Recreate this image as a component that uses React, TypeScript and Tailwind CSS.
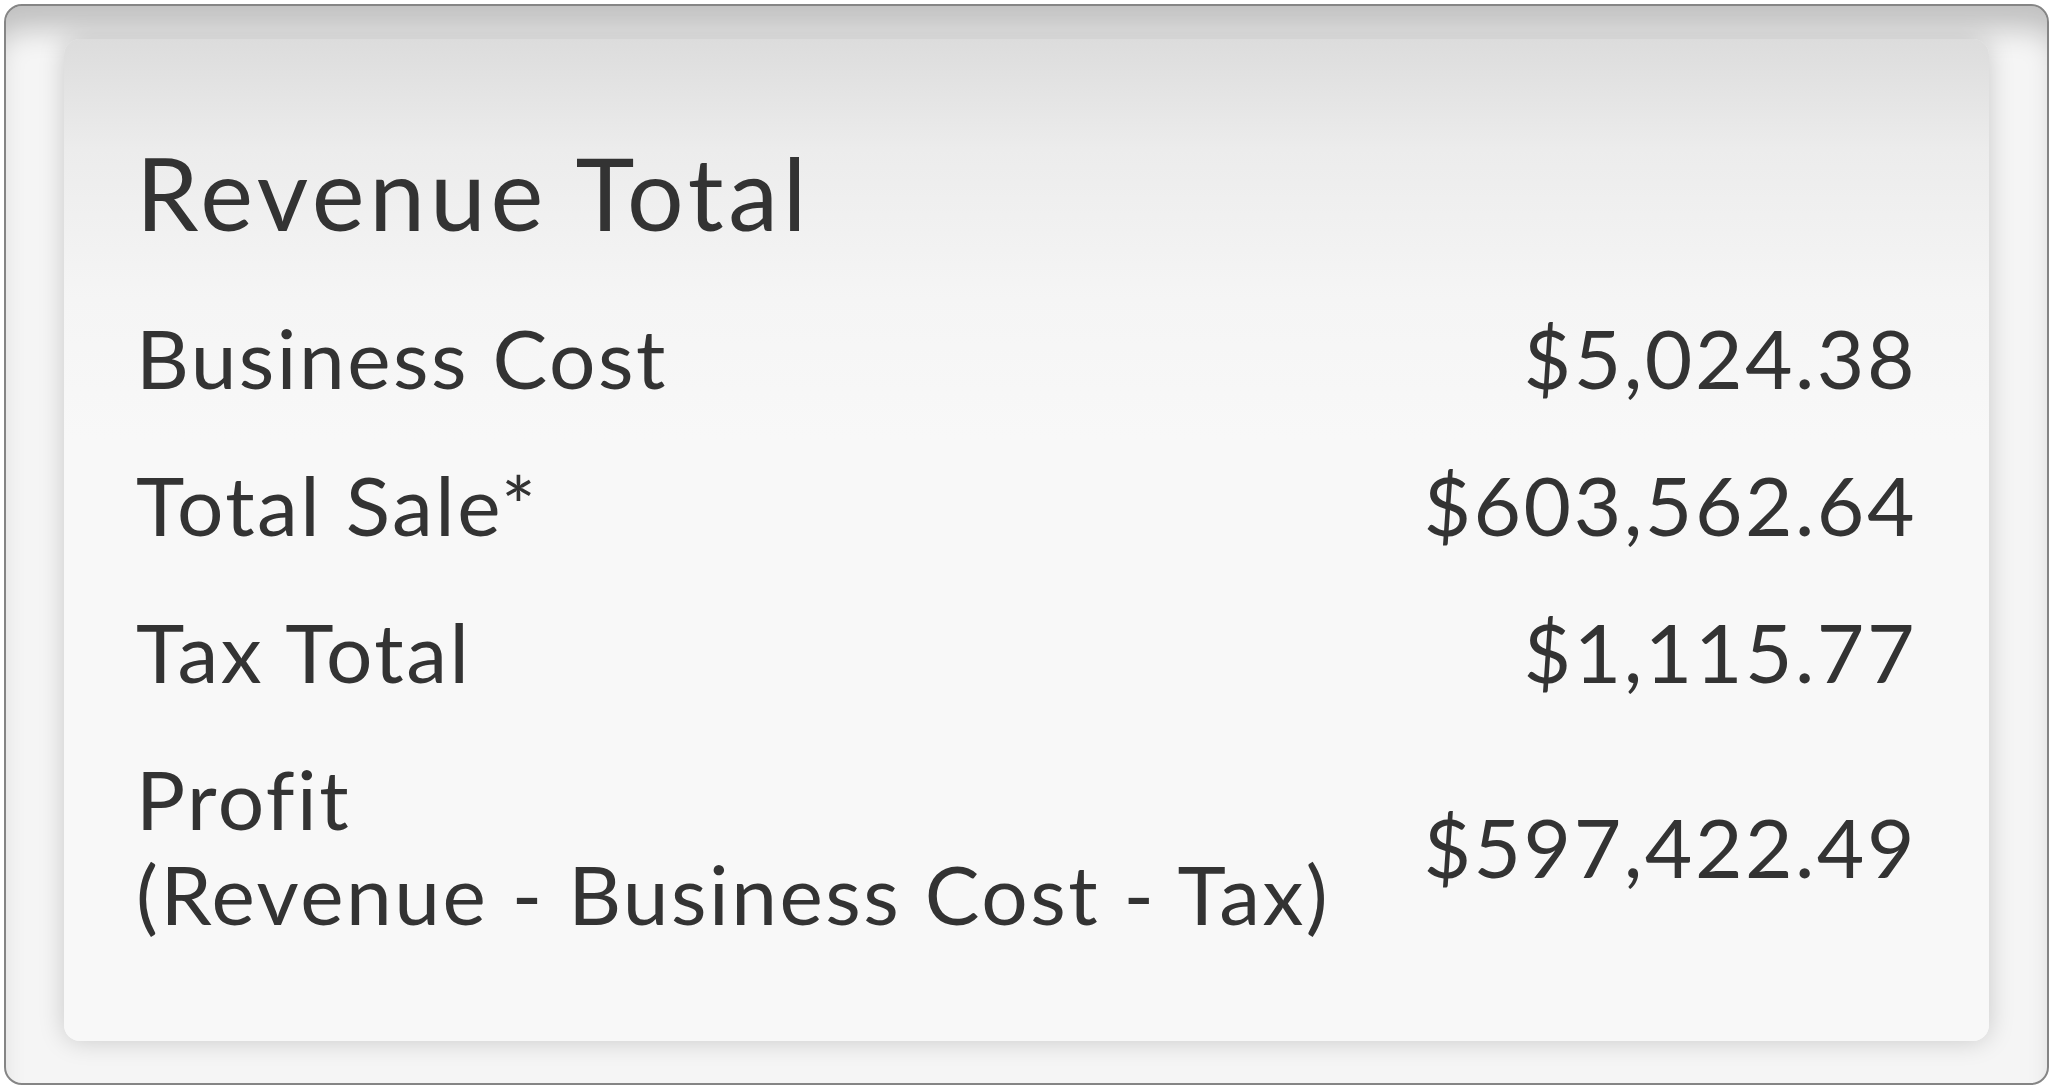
const rows = [
  { label: 'Business Cost', value: '$5,024.38' },
  { label: 'Total Sale*', value: '$603,562.64' },
  { label: 'Tax Total', value: '$1,115.77' },
];

export default function App() {
  return (
    <div className="w-[2053px] h-[1089px] bg-white p-[4px] font-['Lato',sans-serif] text-[#333333]">
      <div className="h-full rounded-[18px] border-2 border-[#858585] bg-[#f5f5f5] px-[58px] pt-[33px] pb-[42px] shadow-[inset_0_34px_30px_-12px_rgba(0,0,0,0.22)]">
        <div className="h-full rounded-[16px] bg-[linear-gradient(to_bottom,#dcdcdc_0px,#ececec_110px,#f5f5f5_260px,#f8f8f8_400px)] pl-[72px] pr-[72px] pt-[98px] shadow-[0_0_26px_rgba(0,0,0,0.18)]">
          <h1 className="text-[100px] leading-[110px] font-normal tracking-[4.8px]">Revenue Total</h1>
          <div className="mt-[63px] flex flex-col gap-[52px] text-[82px] leading-[95px] tracking-[2.5px]">
            {rows.map((r) => (
              <div key={r.label} className="flex items-center justify-between">
                <span>{r.label}</span>
                <span>{r.value}</span>
              </div>
            ))}
            <div className="flex items-center justify-between">
              <span>
                Profit
                <br />
                (Revenue - Business Cost - Tax)
              </span>
              <span>$597,422.49</span>
            </div>
          </div>
        </div>
      </div>
    </div>
  );
}
